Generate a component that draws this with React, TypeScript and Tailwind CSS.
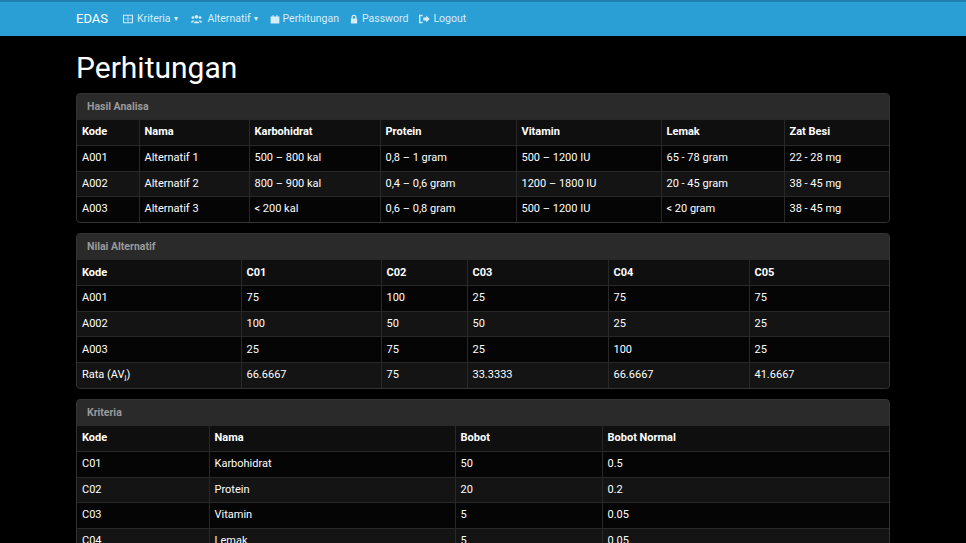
import React from "react";

const Icon = ({ d, w = 12 }: { d: React.ReactNode; w?: number }) => (
  <svg width={w} height="10" viewBox="0 0 16 14" fill="currentColor" className="mr-[3px]">{d}</svg>
);

function Table({ cols, head, rows }: { cols: number[]; head: React.ReactNode[]; rows: React.ReactNode[][] }) {
  return (
    <table className="w-full border-collapse text-[11px] table-fixed">
      <colgroup>{cols.map((c, i) => <col key={i} style={{ width: c }} />)}</colgroup>
      <thead>
        <tr className="bg-[#0f0f0f] h-[26px]">
          {head.map((h, i) => <th key={i} className="text-left font-bold px-[5px] border-t border-l first:border-l-0 border-[#282828] text-white">{h}</th>)}
        </tr>
      </thead>
      <tbody>
        {rows.map((r, ri) => (
          <tr key={ri} className={`h-[25.6px] ${ri % 2 === 0 ? "bg-[#050505]" : "bg-[#141414]"}`}>
            {r.map((c, i) => <td key={i} className="px-[5px] border-t border-l first:border-l-0 border-[#282828] text-white">{c}</td>)}
          </tr>
        ))}
      </tbody>
    </table>
  );
}

function Card({ title, children }: { title: string; children: React.ReactNode }) {
  return (
    <div className="rounded-[4px] border border-[#333] bg-[#222] overflow-hidden mb-[10px]">
      <div className="h-[25px] bg-[#2a2a2a] px-[10px] flex items-center text-[10.5px] font-bold text-[#9a9a9a]">{title}</div>
      {children}
    </div>
  );
}

export default function App() {
  return (
    <div className="min-h-[543px] bg-black text-white" style={{ fontFamily: "Roboto, sans-serif" }}>
      <div className="h-[36px] bg-[#2a9fd6] border-t-2 border-[#1f7fae] flex items-center px-[76px] text-[10.5px]">
        <span className="text-[13px] text-white mr-[14px]">EDAS</span>
        <div className="flex items-center gap-[10px] text-[#d6ecf7]">
          <span className="flex items-center"><Icon d={<path d="M1 1h14v12H1zM2.5 2.5v4h5v-4zM8.5 2.5v4h5v-4zM2.5 7.5v4h5v-4zM8.5 7.5v4h5v-4z" fillRule="evenodd" />} />Kriteria<span className="ml-[2px] text-[7px]">▼</span></span>
          <span className="flex items-center"><Icon w={15} d={<g><circle cx="8" cy="4" r="2.5" /><circle cx="3" cy="5" r="2" /><circle cx="13" cy="5" r="2" /><path d="M4 13c0-4 8-4 8 0zM0 12c0-3 4-3 5-3L3 12zM16 12c0-3-4-3-5-3l2 3z" /></g>} />Alternatif<span className="ml-[2px] text-[7px]">▼</span></span>
          <span className="flex items-center"><Icon w={10} d={<path d="M1 3h14v11H1zM4 1h2v3H4zM10 1h2v3h-2z" />} />Perhitungan</span>
          <span className="flex items-center"><Icon w={10} d={<path d="M4 6V4a4 4 0 018 0v2h1v8H3V6zM6 6h4V4a2 2 0 00-4 0z" fillRule="evenodd" />} />Password</span>
          <span className="flex items-center"><Icon d={<path d="M1 1h5v2H3v8h3v2H1zM7 5h4V2l5 5-5 5V9H7z" />} />Logout</span>
        </div>
      </div>
      <div className="px-[76px]">
        <h1 className="text-[30px] leading-none pt-[17px] pb-[10px]">Perhitungan</h1>
        <Card title="Hasil Analisa">
          <Table cols={[62, 110, 131, 136, 145, 123, 107]}
            head={["Kode", "Nama", "Karbohidrat", "Protein", "Vitamin", "Lemak", "Zat Besi"]}
            rows={[
              ["A001", "Alternatif 1", "500 – 800 kal", "0,8 – 1 gram", "500 – 1200 IU", "65 - 78 gram", "22 - 28 mg"],
              ["A002", "Alternatif 2", "800 – 900 kal", "0,4 – 0,6 gram", "1200 – 1800 IU", "20 - 45 gram", "38 - 45 mg"],
              ["A003", "Alternatif 3", "< 200 kal", "0,6 – 0,8 gram", "500 – 1200 IU", "< 20 gram", "38 - 45 mg"],
            ]} />
        </Card>
        <Card title="Nilai Alternatif">
          <Table cols={[164, 140, 86, 141, 141, 142]}
            head={["Kode", "C01", "C02", "C03", "C04", "C05"]}
            rows={[
              ["A001", "75", "100", "25", "75", "75"],
              ["A002", "100", "50", "50", "25", "25"],
              ["A003", "25", "75", "25", "100", "25"],
              [<span>Rata (AV<sub className="text-[8px]">j</sub>)</span>, "66.6667", "75", "33.3333", "66.6667", "41.6667"],
            ]} />
        </Card>
        <Card title="Kriteria">
          <Table cols={[132, 246, 147, 289]}
            head={["Kode", "Nama", "Bobot", "Bobot Normal"]}
            rows={[
              ["C01", "Karbohidrat", "50", "0.5"],
              ["C02", "Protein", "20", "0.2"],
              ["C03", "Vitamin", "5", "0.05"],
              ["C04", "Lemak", "5", "0.05"],
              ["C05", "Zat Besi", "20", "0.2"],
            ]} />
        </Card>
      </div>
    </div>
  );
}
